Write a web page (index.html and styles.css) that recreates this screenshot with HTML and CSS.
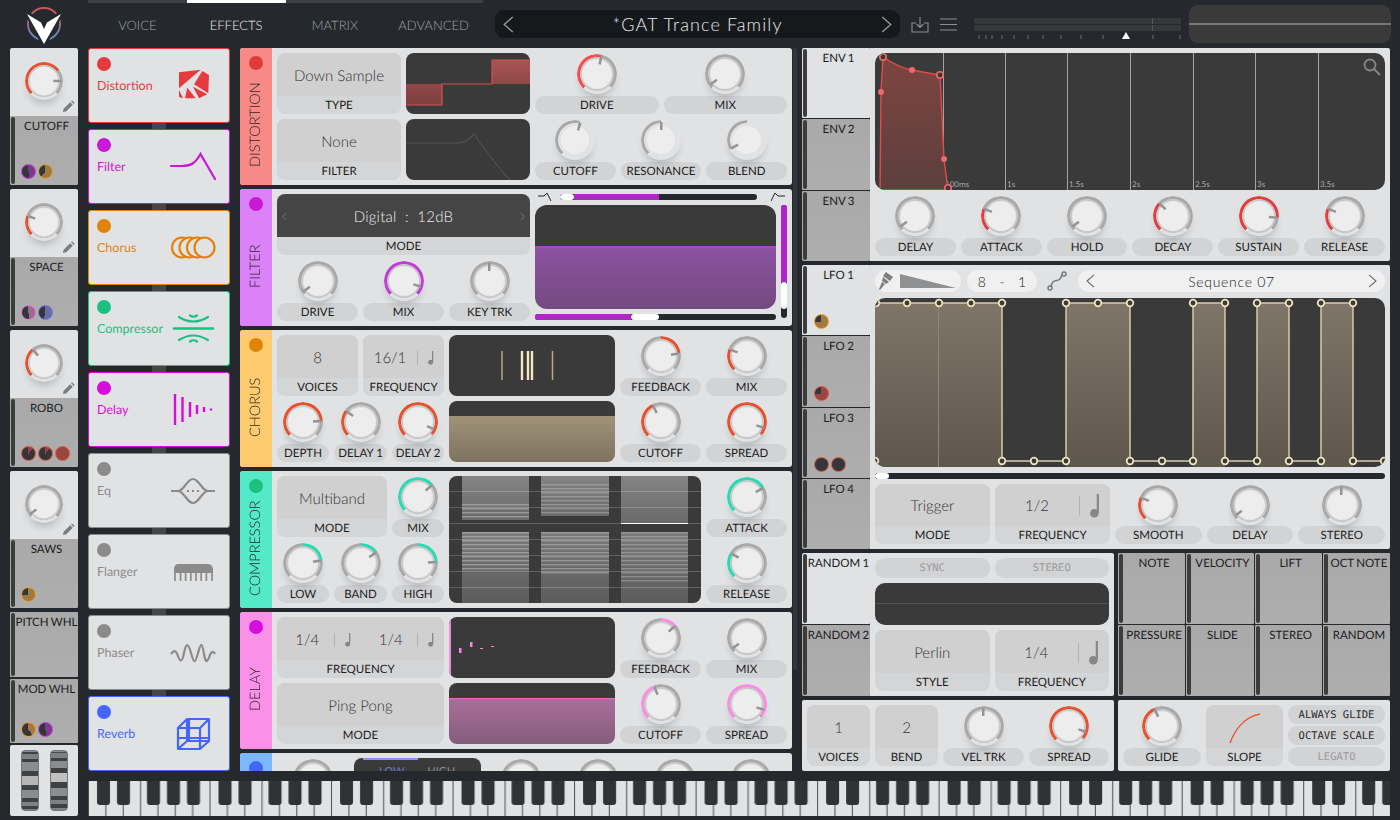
FILE: index.html
```html
<!DOCTYPE html>
<html lang="en">

<head>
    <meta charset="UTF-8">
    <title>Vital</title>
    <link rel="stylesheet" href="styles.css">
</head>

<body>
    <!-- shared icons -->
    <svg class="defs" width="0" height="0">
        <defs>
            <symbol id="note" viewBox="0 0 10 22">
                <path d="M7.6 0V17" fill="none" stroke="currentColor" stroke-width="2" />
                <circle cx="4.4" cy="17.6" r="3.9" fill="currentColor" />
            </symbol>
            <symbol id="pencil" viewBox="0 0 14 14">
                <path d="M1 13l.8-3.6 7-7 2.8 2.8-7 7zM9.8 1.4l1-1 2.8 2.8-1 1z" fill="currentColor" />
            </symbol>
            <symbol id="chev-l" viewBox="0 0 10 16">
                <path d="M9 1L1 8l8 7" fill="none" stroke="currentColor" stroke-width="1.200" />
            </symbol>
            <symbol id="chev-r" viewBox="0 0 10 16">
                <path d="M1 1l8 7-8 7" fill="none" stroke="currentColor" stroke-width="1.200" />
            </symbol>
            <linearGradient id="redfill" x1="0" y1="0" x2="0" y2="1">
                <stop offset="0" stop-color="#a85252" />
                <stop offset="1" stop-color="#7c4040" />
            </linearGradient>
            <linearGradient id="envfill" x1="0" y1="0" x2="0" y2="1">
                <stop offset="0" stop-color="#7e4540" />
                <stop offset="1" stop-color="#5c3f3e" />
            </linearGradient>
            <linearGradient id="lfofill" gradientUnits="userSpaceOnUse" x1="0" y1="0" x2="0" y2="169">
                <stop offset="0" stop-color="#80776a" />
                <stop offset="1" stop-color="#5e574c" />
            </linearGradient>
            <linearGradient id="barfill" x1="0" y1="0" x2="0" y2="1">
                <stop offset="0" stop-color="#848484" />
                <stop offset="1" stop-color="#6a6a6a" />
            </linearGradient>
            <linearGradient id="lowfill" x1="0" y1="0" x2="0" y2="1">
                <stop offset="0" stop-color="#7a7a7a" />
                <stop offset="1" stop-color="#5c5c5c" />
            </linearGradient>
            <pattern id="stripes" width="4" height="4" patternUnits="userSpaceOnUse">
                <rect width="4" height="1.4" fill="#c4c4c4" />
            </pattern>
        </defs>
    </svg>

    <div class="app">
        <div class="logo">
            <svg width="48" height="48" viewBox="0 0 48 48">
                <defs>
                    <linearGradient id="logoring" x1="0" y1="0" x2="0" y2="1">
                        <stop offset="0" stop-color="#c9565a" />
                        <stop offset="0.55" stop-color="#8f6a8c" />
                        <stop offset="1" stop-color="#5f8ec8" />
                    </linearGradient>
                </defs>
                <circle cx="24" cy="24" r="16" fill="none" stroke="url(#logoring)" stroke-width="2" />
                <path d="M5 11L21 21.500 24 29 27 21.500 43 11 25 45H23z" fill="#25292d" stroke="#25292d" stroke-width="3" />
                <path d="M7 14L21 22.500 24 29 27 22.500 41 14 24 44z" fill="#fff" />
            </svg>
        </div>

        <header class="topbar">
            <nav class="tabs-main">
                <a class="main-tab">VOICE</a>
                <a class="main-tab active">EFFECTS</a>
                <a class="main-tab">MATRIX</a>
                <a class="main-tab">ADVANCED</a>
            </nav>
            <div class="preset">
                <svg class="chev" width="11" height="17"><use href="#chev-l" /></svg>
                <span class="preset-name">*GAT Trance Family</span>
                <svg class="chev" width="11" height="17"><use href="#chev-r" /></svg>
            </div>
            <div class="top-icons">
                <svg width="18" height="17" viewBox="0 0 18 17" fill="none" stroke="#8b8e91" stroke-width="1.100">
                    <path d="M5 7H1V16H17V7H13M9 1V11M5.500 8L9 11.500 12.500 8" />
                </svg>
                <svg width="17" height="13" viewBox="0 0 17 13" stroke="#8b8e91" stroke-width="1.100">
                    <path d="M0 1H17M0 6.500H17M0 12H17" />
                </svg>
            </div>
            <div class="meter">
                <div class="meter-bar"></div>
                <div class="meter-bar"></div>
                <svg class="meter-ticks" width="207" height="9" viewBox="0 0 207 9">
                    <path d="M5 3V7M12 3V7M18 3V7M28 3V7M40 3V7M54 3V7M69 3V7M87 3V7M107 3V7M129 3V7M179 3V7M206 3V7" stroke="#6c6f72" />
                    <path d="M152 0L156 7H148z" fill="#fff" />
                </svg>
            </div>
            <div class="scope"></div>
        </header>

        <!-- macro column -->
        <aside class="macros">
            <div class="macro">
                <div class="macro-knob">
                    <div class="knob" style="--b:.7;--v:.83"></div>
                    <svg class="pencil" width="13" height="13"><use href="#pencil" /></svg>
                </div>
                <div class="tab lower">CUTOFF
                    <div class="badges">
                        <i class="badge purple" style="--p:.5"></i>
                        <i class="badge orange" style="--p:.62"></i>
                    </div>
                </div>
            </div>
            <div class="macro">
                <div class="macro-knob">
                    <div class="knob" style="--v:.24"></div>
                    <svg class="pencil" width="13" height="13"><use href="#pencil" /></svg>
                </div>
                <div class="tab lower">SPACE
                    <div class="badges">
                        <i class="badge pink" style="--p:.5"></i>
                        <i class="badge blue" style="--p:.55"></i>
                    </div>
                </div>
            </div>
            <div class="macro">
                <div class="macro-knob">
                    <div class="knob" style="--v:.35"></div>
                    <svg class="pencil" width="13" height="13"><use href="#pencil" /></svg>
                </div>
                <div class="tab lower">ROBO
                    <div class="badges">
                        <i class="badge red" style="--p:.12"></i>
                        <i class="badge red" style="--p:.12"></i>
                        <i class="badge red" style="--p:1"></i>
                    </div>
                </div>
            </div>
            <div class="macro">
                <div class="macro-knob">
                    <div class="knob" style="--b:0;--v:.03"></div>
                    <svg class="pencil" width="13" height="13"><use href="#pencil" /></svg>
                </div>
                <div class="tab lower">SAWS
                    <div class="badges">
                        <i class="badge orange" style="--p:.75"></i>
                    </div>
                </div>
            </div>
            <div class="tab pitch">PITCH WHL</div>
            <div class="tab mod">MOD WHL
                <div class="badges">
                    <i class="badge orange" style="--p:.4"></i>
                    <i class="badge purple" style="--p:.5"></i>
                </div>
            </div>
            <div class="wheels">
                <div class="wheel one"></div>
                <div class="wheel two"></div>
            </div>
        </aside>

        <div class="right">
            <div class="work">
                <!-- effect list -->
                <div class="fx-list">
                    <div class="fx-card c-dist">
                        <div><i class="dot"></i><span class="fx-name">Distortion</span></div>
                        <svg class="fx-icon" width="46" height="34" viewBox="0 0 46 34" fill="currentColor">
                            <path d="M9 3.300L30.700 .7 9 19.300z" />
                            <path d="M32.300 2L39 6 38.300 24.300 24 15.300z" />
                            <path d="M23 17.700L37.300 25.300 29 29.300z" />
                            <path d="M17.300 18.700L25.700 29.300H15z" />
                            <path d="M9 21L13 29.300 9 28z" />
                        </svg>
                    </div>
                    <i class="fx-link"></i>
                    <div class="fx-card c-filter">
                        <div><i class="dot"></i><span class="fx-name">Filter</span></div>
                        <svg class="fx-icon" width="46" height="34" viewBox="0 0 46 34">
                            <path d="M1 16H12C22 16 26 12 30.500 4L45 29" fill="none" stroke="currentColor" stroke-width="2.200" stroke-linecap="round" />
                        </svg>
                    </div>
                    <i class="fx-link"></i>
                    <div class="fx-card c-chorus">
                        <div><i class="dot"></i><span class="fx-name">Chorus</span></div>
                        <svg class="fx-icon" width="46" height="34" viewBox="0 0 46 34" fill="#e1e2e4" stroke="currentColor" stroke-width="2.200">
                            <circle cx="12" cy="16.500" r="10" />
                            <circle cx="19.500" cy="16.500" r="10" />
                            <circle cx="27" cy="16.500" r="10" />
                            <circle cx="34.500" cy="16.500" r="10" />
                        </svg>
                    </div>
                    <i class="fx-link"></i>
                    <div class="fx-card c-comp">
                        <div><i class="dot"></i><span class="fx-name">Compressor</span></div>
                        <svg class="fx-icon" width="46" height="34" viewBox="0 0 46 34" fill="none" stroke="currentColor" stroke-width="2.200" stroke-linecap="round">
                            <path d="M4 16.500H43" stroke-width="2.600" />
                            <path d="M9 5Q23 14 38 5M9 28Q23 19 38 28" />
                            <path d="M20 3.500Q23.500 6 27 3.500M20 29.500Q23.500 27 27 29.500" />
                        </svg>
                    </div>
                    <i class="fx-link"></i>
                    <div class="fx-card c-delay">
                        <div><i class="dot"></i><span class="fx-name">Delay</span></div>
                        <svg class="fx-icon" width="46" height="34" viewBox="0 0 46 34" stroke="currentColor" stroke-width="2.400">
                            <path d="M5 1V32M12.500 4V29M20 9V24M27 12V21M34 14V19M41 15.500V17.500" />
                        </svg>
                    </div>
                    <i class="fx-link"></i>
                    <div class="fx-card c-off">
                        <div><i class="dot"></i><span class="fx-name">Eq</span></div>
                        <svg class="fx-icon" width="46" height="34" viewBox="0 0 46 34" fill="none" stroke="currentColor" stroke-width="2.200">
                            <path d="M1 17H8C14 17 17 5 23 5S32 17 38 17H45M8 17C14 17 17 29 23 29S32 17 38 17" />
                            <path d="M17 17H29" stroke-dasharray="2 3" />
                        </svg>
                    </div>
                    <i class="fx-link"></i>
                    <div class="fx-card c-off">
                        <div><i class="dot"></i><span class="fx-name">Flanger</span></div>
                        <svg class="fx-icon" width="46" height="34" viewBox="0 0 46 34">
                            <path d="M4 15C4 10 6 9 9 9H37C40 9 43 10 43 15V18H4z" fill="currentColor" />
                            <path d="M5 17V26M10.500 17V26M15.600 17V26M20.800 17V26M26 17V26M31.200 17V26M36.400 17V26M42 17V26" stroke="currentColor" stroke-width="1.700" />
                        </svg>
                    </div>
                    <i class="fx-link"></i>
                    <div class="fx-card c-off">
                        <div><i class="dot"></i><span class="fx-name">Phaser</span></div>
                        <svg class="fx-icon" width="46" height="34" viewBox="0 0 46 34">
                            <path d="M1 18C4 14 6 14 8 20S12 27 14 17 18 6 21 17 25 28 28 17 32 6 34 18 38 24 40 19 44 16 45 18" fill="none" stroke="currentColor" stroke-width="2.200" />
                        </svg>
                    </div>
                    <i class="fx-link"></i>
                    <div class="fx-card c-reverb">
                        <div><i class="dot"></i><span class="fx-name">Reverb</span></div>
                        <svg class="fx-icon" width="46" height="34" viewBox="0 0 46 34" fill="none" stroke="currentColor" stroke-width="2.200" stroke-linejoin="round">
                            <path d="M8 11L17 2H39V24L30 32H8zM8 11H30V32M30 11L39 2M17 2V24H39M17 24L8 32M19 2V24M8 21H39" />
                        </svg>
                    </div>
                </div>

                <!-- effect panels -->
                <div class="fx-stack">
                    <section class="panel p-dist">
                        <div class="strip"><i class="dot"></i><span class="strip-name">DISTORTION</span></div>
                        <div class="dist-grid">
                            <div class="box"><div class="value">Down Sample</div><div class="name">TYPE</div></div>
                            <div class="graph">
                                <svg width="124" height="61">
                                    <path d="M0 31H36V52H0zM86 31V7H124V31z" fill="url(#redfill)" />
                                    <path d="M0 52H36V31H86V7H124" fill="none" stroke="#d4504e" stroke-width="1.200" />
                                </svg>
                            </div>
                            <div class="cells">
                                <div class="ctl"><div class="knob" style="--v:.55"></div><div class="pill">DRIVE</div></div>
                                <div class="ctl"><div class="knob" style="--b:0;--v:.03"></div><div class="pill">MIX</div></div>
                            </div>
                            <div class="box"><div class="value">None</div><div class="name">FILTER</div></div>
                            <div class="graph">
                                <svg width="124" height="61">
                                    <path d="M0 24H50C58 24 62 22 68 15 78 30 92 48 104 61" fill="none" stroke="#505050" stroke-width="1.200" />
                                </svg>
                            </div>
                            <div class="cells">
                                <div class="ctl"><div class="knob dim" style="--v:.56"></div><div class="pill">CUTOFF</div></div>
                                <div class="ctl"><div class="knob dim" style="--v:.5"></div><div class="pill">RESONANCE</div></div>
                                <div class="ctl"><div class="knob dim" style="--a:.06;--b:.5;--v:.06"></div><div class="pill">BLEND</div></div>
                            </div>
                        </div>
                    </section>

                    <section class="panel p-filter">
                        <div class="strip"><i class="dot"></i><span class="strip-name">FILTER</span></div>
                        <div class="filter-grid">
                            <div class="filter-left">
                                <div class="box mode">
                                    <div class="value">
                                        <svg width="5" height="9"><use href="#chev-l" /></svg>
                                        <b>Digital&nbsp; :&nbsp; 12dB</b>
                                        <svg width="5" height="9"><use href="#chev-r" /></svg>
                                    </div>
                                    <div class="name">MODE</div>
                                </div>
                                <div class="cells">
                                    <div class="ctl"><div class="knob" style="--b:0;--v:.03"></div><div class="pill">DRIVE</div></div>
                                    <div class="ctl"><div class="knob" style="--b:1;--v:.9"></div><div class="pill">MIX</div></div>
                                    <div class="ctl"><div class="knob" style="--a:.5;--v:.5"></div><div class="pill">KEY TRK</div></div>
                                </div>
                            </div>
                            <div class="filter-right">
                                <div class="slider-row">
                                    <svg width="14" height="10" viewBox="0 0 14 10" fill="none" stroke="#222"><path d="M0 4H6L9 1 13 9" /></svg>
                                    <div class="slider"><i class="grip" style="width:14px"></i><i class="fill" style="width:85px"></i></div>
                                    <svg width="14" height="10" viewBox="0 0 14 10" fill="none" stroke="#222"><path d="M0 9L4 1 7 4H14" /></svg>
                                </div>
                                <div class="filter-view">
                                    <div class="graph wave-filter"></div>
                                    <div class="slider vert"><i class="fill" style="height:77px"></i><i class="grip" style="height:27px"></i></div>
                                </div>
                                <div class="slider low"><i class="fill" style="width:96px"></i><i class="grip" style="width:28px"></i></div>
                            </div>
                        </div>
                    </section>

                    <section class="panel p-chorus">
                        <div class="strip"><i class="dot"></i><span class="strip-name">CHORUS</span></div>
                        <div class="fx-grid">
                            <div class="span3 cells">
                                <div class="box"><div class="value">8</div><div class="name">VOICES</div></div>
                                <div class="box"><div class="value sync"><span class="num">16/1</span><i class="sep"></i><svg class="note" width="8" height="14"><use href="#note" /></svg></div><div class="name">FREQUENCY</div></div>
                            </div>
                            <div class="graph">
                                <svg width="166" height="61">
                                    <path d="M53 16V45M103.500 16V45" stroke="#bba987" stroke-width="1.500" />
                                    <path d="M73 16V45M79 16V45M83 16V45" stroke="#f4e6c4" stroke-width="2.400" />
                                </svg>
                            </div>
                            <div class="ctl"><div class="knob" style="--a:.5;--v:.8"></div><div class="pill">FEEDBACK</div></div>
                            <div class="ctl"><div class="knob" style="--v:.24"></div><div class="pill">MIX</div></div>
                            <div class="ctl"><div class="knob" style="--v:.82"></div><div class="pill">DEPTH</div></div>
                            <div class="ctl"><div class="knob" style="--v:.3"></div><div class="pill">DELAY 1</div></div>
                            <div class="ctl"><div class="knob" style="--b:.98;--v:.92"></div><div class="pill">DELAY 2</div></div>
                            <div class="graph wave-chorus"></div>
                            <div class="ctl"><div class="knob" style="--v:.4"></div><div class="pill">CUTOFF</div></div>
                            <div class="ctl"><div class="knob" style="--b:.98;--v:.9"></div><div class="pill">SPREAD</div></div>
                        </div>
                    </section>

                    <section class="panel p-comp">
                        <div class="strip"><i class="dot"></i><span class="strip-name">COMPRESSOR</span></div>
                        <div class="fx-grid">
                            <div class="box span2"><div class="value">Multiband</div><div class="name">MODE</div></div>
                            <div class="ctl"><div class="knob" style="--v:.68"></div><div class="pill">MIX</div></div>
                            <div class="graph comp-view">
                                <svg width="252" height="127">
                                    <rect x="13" width="67" height="44" fill="url(#barfill)" />
                                    <rect x="92" width="68" height="40" fill="url(#barfill)" />
                                    <rect x="172" width="67" height="47" fill="url(#barfill)" />
                                    <rect x="13" y="56" width="67" height="71" fill="url(#lowfill)" />
                                    <rect x="92" y="56" width="68" height="71" fill="url(#lowfill)" />
                                    <rect x="172" y="56" width="67" height="71" fill="url(#lowfill)" />
                                    <rect x="13" y="28" width="67" height="16" fill="url(#stripes)" opacity=".5" />
                                    <rect x="92" y="8" width="68" height="32" fill="url(#stripes)" opacity=".4" />
                                    <rect x="13" y="56" width="67" height="40" fill="url(#stripes)" opacity=".5" />
                                    <rect x="92" y="56" width="68" height="44" fill="url(#stripes)" opacity=".45" />
                                    <rect x="172" y="56" width="67" height="52" fill="url(#stripes)" opacity=".4" />
                                    <path d="M172 47.500H239" stroke="#fff" stroke-width="1.200" />
                                    <path d="M0 15.500H252M0 31.500H252M0 47.500H252M0 63.500H252M0 79.500H252M0 95.500H252M0 111.500H252" stroke="#fff" stroke-opacity=".2" />
                                </svg>
                            </div>
                            <div class="ctl"><div class="knob" style="--v:.72"></div><div class="pill">ATTACK</div></div>
                            <div class="ctl"><div class="knob" style="--a:.5;--v:.8"></div><div class="pill">LOW</div></div>
                            <div class="ctl"><div class="knob" style="--a:.5;--v:.7"></div><div class="pill">BAND</div></div>
                            <div class="ctl"><div class="knob" style="--a:.5;--v:.82"></div><div class="pill">HIGH</div></div>
                            <div class="ctl"><div class="knob" style="--v:.28"></div><div class="pill">RELEASE</div></div>
                        </div>
                    </section>

                    <section class="panel p-delay">
                        <div class="strip"><i class="dot"></i><span class="strip-name">DELAY</span></div>
                        <div class="fx-grid">
                            <div class="box span3">
                                <div class="value twin">
                                    <div class="sync"><span class="num">1/4</span><i class="sep"></i><svg class="note" width="8" height="14"><use href="#note" /></svg></div>
                                    <div class="sync"><span class="num">1/4</span><i class="sep"></i><svg class="note" width="8" height="14"><use href="#note" /></svg></div>
                                </div>
                                <div class="name">FREQUENCY</div>
                            </div>
                            <div class="graph">
                                <svg width="166" height="61" fill="#f08ae0">
                                    <rect width="2" height="61" />
                                    <rect x="10" y="31" width="2.500" height="5" />
                                    <rect x="21" y="25" width="2.500" height="5" />
                                    <rect x="31" y="31" width="3" height="1" />
                                    <rect x="42" y="29" width="3" height="1" />
                                </svg>
                            </div>
                            <div class="ctl"><div class="knob" style="--a:.5;--v:.68"></div><div class="pill">FEEDBACK</div></div>
                            <div class="ctl"><div class="knob" style="--b:0;--v:.03"></div><div class="pill">MIX</div></div>
                            <div class="box span3"><div class="value">Ping Pong</div><div class="name">MODE</div></div>
                            <div class="graph wave-delay"></div>
                            <div class="ctl"><div class="knob" style="--v:.42"></div><div class="pill">CUTOFF</div></div>
                            <div class="ctl"><div class="knob" style="--b:.98;--v:.9"></div><div class="pill">SPREAD</div></div>
                        </div>
                    </section>

                    <section class="panel p-reverb">
                        <div class="strip"><i class="dot"></i></div>
                        <div class="reverb-row">
                            <div class="ctl"><div class="knob" style="--b:0;--v:.1"></div></div>
                            <div class="band-box"><span class="on">LOW</span><span>HIGH</span></div>
                            <div class="ctl"><div class="knob" style="--v:.2"></div></div>
                            <div class="ctl"><div class="knob" style="--b:0;--v:.1"></div></div>
                            <div class="ctl"><div class="knob" style="--b:0;--v:.1"></div></div>
                            <div class="ctl"><div class="knob" style="--b:0;--v:.1"></div></div>
                        </div>
                    </section>
                </div>
                <i class="scrollbar"></i>

                <!-- modulators -->
                <div class="mods">
                    <section class="tabbed env">
                        <div class="tabs">
                            <div class="tab on">ENV 1</div>
                            <div class="tab">ENV 2</div>
                            <div class="tab">ENV 3</div>
                        </div>
                        <div class="tab-body">
                            <div class="graph">
                                <svg class="env-svg" width="510" height="137">
                                    <path d="M68.500 0V137M130.500 0V137M192.500 0V137M255.500 0V137M318.500 0V137M380.500 0V137M443.500 0V137" stroke="#a4a4a4" />
                                    <g class="env-time">
                                        <text x="70" y="134">100ms</text>
                                        <text x="132" y="134">1s</text>
                                        <text x="194" y="134">1.5s</text>
                                        <text x="257" y="134">2s</text>
                                        <text x="320" y="134">2.5s</text>
                                        <text x="382" y="134">3s</text>
                                        <text x="445" y="134">3.5s</text>
                                    </g>
                                    <path d="M5 137L6 39 8 4C17 10 26 15 37 17L65 22 69 106 73 137z" fill="url(#envfill)" stroke="#e04c48" stroke-width="1.400" />
                                    <g class="env-dots">
                                        <circle cx="37" cy="17" r="3" />
                                        <circle cx="6" cy="39" r="3" />
                                        <circle cx="69" cy="106" r="3" />
                                    </g>
                                    <g class="env-nodes">
                                        <circle cx="8" cy="4" r="3.200" />
                                        <circle cx="65" cy="22" r="3.200" />
                                        <circle cx="73" cy="135" r="3.200" />
                                    </g>
                                    <g fill="none" stroke="#85878a" stroke-width="1.800">
                                        <circle cx="495" cy="12" r="5.500" />
                                        <path d="M499 16L505 22" />
                                    </g>
                                </svg>
                            </div>
                            <div class="cells">
                                <div class="ctl"><div class="knob" style="--b:0;--v:.03"></div><div class="pill">DELAY</div></div>
                                <div class="ctl"><div class="knob" style="--v:.25"></div><div class="pill">ATTACK</div></div>
                                <div class="ctl"><div class="knob" style="--b:0;--v:.03"></div><div class="pill">HOLD</div></div>
                                <div class="ctl"><div class="knob" style="--v:.32"></div><div class="pill">DECAY</div></div>
                                <div class="ctl"><div class="knob" style="--v:.85"></div><div class="pill">SUSTAIN</div></div>
                                <div class="ctl"><div class="knob" style="--v:.25"></div><div class="pill">RELEASE</div></div>
                            </div>
                        </div>
                    </section>

                    <section class="tabbed lfo">
                        <div class="tabs">
                            <div class="tab on">LFO 1<div class="badges"><i class="badge orange" style="--p:.75"></i></div></div>
                            <div class="tab">LFO 2<div class="badges"><i class="badge red" style="--p:.75"></i></div></div>
                            <div class="tab">LFO 3<div class="badges"><i class="badge red" style="--p:0"></i><i class="badge red" style="--p:0"></i></div></div>
                            <div class="tab">LFO 4</div>
                        </div>
                        <div class="tab-body">
                            <div class="lfo-tools">
                                <div class="tool paint">
                                    <svg width="16" height="18" viewBox="0 0 16 18" fill="#7d7f82">
                                        <path d="M8 0L15 5 12 9 5 4zM5 5L11 10 8 12 4 9zM4 10L7 12 2 18 1 17z" />
                                    </svg>
                                    <svg width="56" height="14" viewBox="0 0 56 14" fill="#8f9091"><path d="M0 0L56 14H0z" /></svg>
                                </div>
                                <div class="tool grid-size"><span>8</span><span>-</span><span>1</span></div>
                                <svg class="curve" width="20" height="20" viewBox="0 0 20 20" fill="none" stroke="#77797c" stroke-width="1.500">
                                    <circle cx="3" cy="17" r="2" />
                                    <circle cx="17" cy="3" r="2" />
                                    <path d="M4 15C7 5 12 14 15 4" />
                                </svg>
                                <div class="tool seq">
                                    <svg class="chev" width="9" height="14"><use href="#chev-l" /></svg>
                                    <span class="seq-name">Sequence 07</span>
                                    <svg class="chev" width="9" height="14"><use href="#chev-r" /></svg>
                                </div>
                            </div>
                            <div class="graph">
                                <svg class="lfo-svg" width="510" height="169">
                                    <path d="M0 5H127V169H0zM191 5H255V169H191zM318 5H350V169H318zM382 5H414V169H382zM446 5H478V169H446z" fill="url(#lfofill)" />
                                    <path d="M63.500 5V169" stroke="#8f8677" />
                                    <path d="M0 5H127V163H191V5H255V163H318V5H350V163H382V5H414V163H446V5H478V163H510" fill="none" stroke="#d8cba8" stroke-width="1.500" />
                                    <g class="lfo-nodes">
                                        <circle cx="1" cy="5" /><circle cx="32" cy="5" /><circle cx="64" cy="5" /><circle cx="96" cy="5" /><circle cx="127" cy="5" />
                                        <circle cx="191" cy="5" /><circle cx="223" cy="5" /><circle cx="255" cy="5" />
                                        <circle cx="318" cy="5" /><circle cx="350" cy="5" /><circle cx="382" cy="5" /><circle cx="414" cy="5" /><circle cx="446" cy="5" /><circle cx="478" cy="5" />
                                        <circle cx="0" cy="163" /><circle cx="127" cy="163" /><circle cx="159" cy="163" /><circle cx="191" cy="163" />
                                        <circle cx="255" cy="163" /><circle cx="287" cy="163" /><circle cx="318" cy="163" /><circle cx="350" cy="163" />
                                        <circle cx="382" cy="163" /><circle cx="414" cy="163" /><circle cx="446" cy="163" /><circle cx="478" cy="163" /><circle cx="509" cy="163" />
                                    </g>
                                </svg>
                            </div>
                            <div class="slider lfo-scroll"><i class="grip" style="width:14px"></i></div>
                            <div class="cells lfo-controls">
                                <div class="box"><div class="value">Trigger</div><div class="name">MODE</div></div>
                                <div class="box"><div class="value sync big"><span class="num">1/2</span><i class="sep"></i><svg class="note" width="12" height="24"><use href="#note" /></svg></div><div class="name">FREQUENCY</div></div>
                                <div class="ctl"><div class="knob" style="--v:.25"></div><div class="pill">SMOOTH</div></div>
                                <div class="ctl"><div class="knob" style="--b:0;--v:.03"></div><div class="pill">DELAY</div></div>
                                <div class="ctl"><div class="knob" style="--a:.5;--v:.5"></div><div class="pill">STEREO</div></div>
                            </div>
                        </div>
                    </section>

                    <div class="mod-row">
                        <section class="tabbed random">
                            <div class="tabs">
                                <div class="tab on">RANDOM 1</div>
                                <div class="tab">RANDOM 2</div>
                            </div>
                            <div class="tab-body">
                                <div class="cells toggles">
                                    <div class="toggle">SYNC</div>
                                    <div class="toggle">STEREO</div>
                                </div>
                                <div class="graph flat-line"></div>
                                <div class="cells">
                                    <div class="box"><div class="value">Perlin</div><div class="name">STYLE</div></div>
                                    <div class="box"><div class="value sync big"><span class="num">1/4</span><i class="sep"></i><svg class="note" width="12" height="24"><use href="#note" /></svg></div><div class="name">FREQUENCY</div></div>
                                </div>
                            </div>
                        </section>
                        <section class="key-mods">
                            <div class="tab">NOTE</div>
                            <div class="tab">VELOCITY</div>
                            <div class="tab">LIFT</div>
                            <div class="tab">OCT NOTE</div>
                            <div class="tab">PRESSURE</div>
                            <div class="tab">SLIDE</div>
                            <div class="tab">STEREO</div>
                            <div class="tab">RANDOM</div>
                        </section>
                    </div>

                    <div class="mod-row">
                        <section class="strip-panel voices">
                            <div class="box"><div class="value">1</div><div class="name">VOICES</div></div>
                            <div class="box"><div class="value">2</div><div class="name">BEND</div></div>
                            <div class="ctl"><div class="knob" style="--a:.5;--v:.5"></div><div class="pill">VEL TRK</div></div>
                            <div class="ctl"><div class="knob" style="--b:.98;--v:.9"></div><div class="pill">SPREAD</div></div>
                        </section>
                        <section class="strip-panel glide">
                            <div class="ctl"><div class="knob" style="--v:.41"></div><div class="pill">GLIDE</div></div>
                            <div class="box">
                                <div class="value">
                                    <svg width="32" height="32" viewBox="0 0 32 32"><path d="M1 31C6 17 16 5 31 2" fill="none" stroke="#e8512e" stroke-width="1.400" /></svg>
                                </div>
                                <div class="name">SLOPE</div>
                            </div>
                            <div class="glide-btns">
                                <div class="toggle on">ALWAYS GLIDE</div>
                                <div class="toggle on">OCTAVE SCALE</div>
                                <div class="toggle">LEGATO</div>
                            </div>
                        </section>
                    </div>
                </div>
            </div>

            <svg class="keys" width="1302" height="35">
                <defs>
                    <pattern id="octave" width="121.520" height="35" patternUnits="userSpaceOnUse">
                        <path d="M.5 0V35M17.860 0V35M35.220 0V35M52.580 0V35M69.940 0V35M87.300 0V35M104.660 0V35" stroke="#4a4c4e" />
                        <g fill="#303234">
                            <rect x="9" y="-3" width="13" height="27" rx="3" />
                            <rect x="29" y="-3" width="13" height="27" rx="3" />
                            <rect x="59" y="-3" width="13" height="27" rx="3" />
                            <rect x="79" y="-3" width="13" height="27" rx="3" />
                            <rect x="99" y="-3" width="13" height="27" rx="3" />
                        </g>
                    </pattern>
                </defs>
                <rect width="1302" height="35" fill="#e1e2e4" />
                <rect width="1302" height="35" fill="url(#octave)" />
            </svg>
        </div>
    </div>
</body>

</html>
```

FILE: styles.css
```css
* {
    box-sizing: border-box;
    margin: 0;
    padding: 0;
}

html,
body {
    height: 100%;
    background-color: #25292d;
    color: #1c1c1c;
    font-family: Lato, "Noto Sans", sans-serif;
    font-size: 11.500px;
    text-rendering: geometricPrecision;
    overflow: hidden;
}

.defs {
    position: absolute;
}

i {
    font-style: normal;
    display: block;
}

svg {
    display: block;
}

.app {
    width: 1400px;
    height: 820px;
    padding: 0 10px;
    display: grid;
    grid-template-columns: 68px 1fr;
    grid-template-rows: 48px 1fr;
    column-gap: 10px;
}

/* header */
.logo {
    display: flex;
    justify-content: center;
    margin-top: 0;
}

.topbar {
    display: flex;
    align-items: flex-start;
}

.tabs-main {
    width: 395px;
    display: flex;
}

.main-tab {
    flex: 1;
    height: 38px;
    border-top: 3px solid #3c3f43;
    text-align: center;
    line-height: 44px;
    font-size: 13px;
    font-weight: 300;
    color: #a2a4a6;
}

.main-tab.active {
    border-top-color: #fff;
    color: #f0f0f0;
}

.preset {
    width: 405px;
    height: 28px;
    margin: 10px 0 0 12px;
    padding: 0 8px;
    border-radius: 9px;
    background-color: #16191c;
    display: flex;
    align-items: center;
    justify-content: space-between;
}

.chev {
    color: #9b9d9f;
    flex: none;
}

.preset-name {
    font-size: 18px;
    font-weight: 300;
    letter-spacing: 1.100px;
    color: #eceded;
}

.top-icons {
    display: flex;
    align-items: center;
    gap: 11px;
    margin: 16px 0 0 11px;
}

.meter {
    width: 207px;
    margin: 18px 0 0 17px;
    display: flex;
    flex-direction: column;
    gap: 1px;
}

.meter-bar {
    height: 6px;
    border-radius: 1px;
    background: linear-gradient(90deg, #35383b 86%, #55585a 86% 86.500%, #35383b 86.500%);
}

.meter-ticks {
    margin-top: 0;
}

.scope {
    width: 202px;
    height: 38px;
    margin: 5px 0 0 8px;
    border-radius: 9px;
    background: linear-gradient(#3a3a3a 18px, #787878 18px 20px, #3a3a3a 20px);
}

/* macros */
.macros {
    display: flex;
    flex-direction: column;
    gap: 4px;
    height: 768px;
}

.macro {
    height: 137px;
    display: flex;
    flex-direction: column;
    background-color: #e1e2e4;
    border-radius: 2px;
    overflow: hidden;
    flex: none;
}

.macro-knob {
    height: 68px;
    position: relative;
    display: flex;
    justify-content: center;
    padding-top: 14px;
}

.macro-knob .knob {
    width: 38px;
    height: 38px;
}

.pencil {
    position: absolute;
    right: 3px;
    bottom: 3px;
    color: #7c7c7c;
}

.lower {
    flex: 1;
}

.pitch {
    height: 65px;
    flex: none;
}

.mod {
    height: 64px;
    flex: none;
    margin-top: -2px;
}

.wheels {
    height: 71px;
    flex: none;
    margin-top: -2px;
    background-color: #e1e2e4;
    border-radius: 2px;
    display: flex;
    justify-content: center;
    gap: 11px;
    padding-top: 5px;
}

.wheel {
    width: 18px;
    height: 61px;
    border-radius: 4px;
    border: 1px solid #737578;
}

.wheel.one {
    background: linear-gradient(#8a8c8e 0 1px, #3f4042 1px 3px, #7e8082 3px 8px, #3f4042 8px 11px, #8a8c8e 11px 20px, #3f4042 20px 25px, #b6b6b6 25px 34px, #3f4042 34px 39px, #8a8c8e 39px 47px, #3f4042 47px 51px, #7e8082 51px 55px, #3f4042 55px 58px, #7e8082 58px);
}

.wheel.two {
    background: linear-gradient(#8a8c8e 0 1px, #4a4b4d 1px 2px, #7e8082 2px 7px, #3f4042 7px 10px, #8a8c8e 10px 17px, #3f4042 17px 22px, #c0c0c0 22px 31px, #3f4042 31px 37px, #8a8c8e 37px 45px, #3f4042 45px 49px, #7e8082 49px 53px, #3f4042 53px 57px, #7e8082 57px);
}

.badges {
    display: flex;
    gap: 2px;
    margin-top: auto;
    padding: 0 0 6px 6px;
}

.badge {
    width: 15px;
    height: 15px;
    border-radius: 50%;
    border: 1px solid var(--ring);
    background: conic-gradient(var(--tint) calc(var(--p) * 360deg), #35363a 0);
}

.badge.purple {
    --ring: #c23cd6;
    --tint: #7c3a8e;
}

.badge.orange {
    --ring: #e9a030;
    --tint: #a17a42;
}

.badge.red {
    --ring: #e5513a;
    --tint: #98463f;
}

.badge.pink {
    --ring: #e873d6;
    --tint: #9a6a92;
}

.badge.blue {
    --ring: #6478ec;
    --tint: #666ea4;
}

/* tabs with a slot on the left */
.tab {
    position: relative;
    display: flex;
    flex-direction: column;
    padding: 2px 0 0 5px;
    line-height: 18px;
    text-align: center;
    white-space: nowrap;
    word-spacing: -0.500px;
    background: linear-gradient(#a9a9a9, #aeaeae);
    border-radius: 1px;
}

.tab::before {
    content: "";
    position: absolute;
    left: 1px;
    top: 1px;
    bottom: 1px;
    width: 4px;
    border-radius: 2px;
    background-color: #3c3c3c;
}

.tab.on {
    background: #e1e2e4;
}

/* right side */
.right {
    display: flex;
    flex-direction: column;
    gap: 10px;
    min-width: 0;
}

.work {
    height: 723px;
    display: flex;
    gap: 10px;
    position: relative;
}

/* effect list */
.fx-list {
    width: 142px;
    flex: none;
    display: flex;
    flex-direction: column;
    align-items: center;
}

.fx-card {
    width: 100%;
    height: 75px;
    flex: none;
    padding: 9px 13px 0 9px;
    display: flex;
    justify-content: space-between;
    background-color: #e1e2e4;
    border: 1px solid currentColor;
    border-radius: 3px;
}

.fx-card .dot {
    margin: -1px 0 0 -1px;
    background-color: currentColor;
}

.fx-name {
    display: block;
    margin: 7px 0 0 -1px;
    font-size: 12.500px;
    line-height: 16px;
}

.fx-icon {
    margin-top: 11px;
}

.fx-link {
    width: 14px;
    height: 6px;
    flex: none;
    background-color: #44474a;
}

.dot {
    width: 14px;
    height: 14px;
    border-radius: 50%;
}

.c-dist {
    color: #e53b3f;
}

.c-filter {
    color: #c918d8;
}

.c-chorus {
    color: #e08409;
}

.c-comp {
    color: #1cc080;
}

.c-delay {
    color: #d60edd;
}

.c-off {
    color: #8b8b8b;
}

.c-reverb {
    color: #4466ff;
}

/* effect panels */
.fx-stack {
    width: 552px;
    flex: none;
    height: 723px;
    overflow: hidden;
    display: flex;
    flex-direction: column;
    gap: 4px;
}

.panel {
    height: 137px;
    flex: none;
    display: flex;
    background-color: #e1e2e4;
    border-radius: 3px;
    overflow: hidden;
}

.strip {
    width: 32px;
    flex: none;
    display: flex;
    flex-direction: column;
    align-items: center;
    padding: 8px 0 5px;
}

.strip-name {
    flex: 1;
    writing-mode: vertical-rl;
    transform: rotate(180deg);
    text-align: center;
    font-size: 14.500px;
    font-weight: 300;
    color: #231f1f;
    line-height: 32px;
}

.p-dist {
    --accent: #f44e4e;
}

.p-dist .strip {
    background-color: #f78a86;
}

.p-dist .dot {
    background-color: #e03a3a;
}

.p-filter {
    --accent: #c03bd8;
}

.p-filter .strip {
    background-color: #dc82f8;
}

.p-filter .dot {
    background-color: #c918d8;
}

.p-chorus {
    --accent: #e8512e;
}

.p-chorus .strip {
    background-color: #ffcb6f;
}

.p-chorus .dot {
    background-color: #e08409;
}

.p-comp {
    --accent: #27dcb2;
}

.p-comp .strip {
    background-color: #54e9c9;
}

.p-comp .dot {
    background-color: #1cc080;
}

.p-delay {
    --accent: #fb8ce6;
}

.p-delay .strip {
    background-color: #fa90e8;
}

.p-delay .dot {
    background-color: #d60edd;
}

.p-reverb {
    --accent: #8a9cff;
}

.p-reverb .strip {
    background-color: #7bb8fd;
}

.p-reverb .dot {
    background-color: #4466ff;
}

.cells {
    display: flex;
    gap: 5px;
    min-width: 0;
}

.cells > * {
    flex: 1;
    min-width: 0;
}

.dist-grid {
    flex: 1;
    padding: 5px;
    display: grid;
    grid-template-columns: 124px 124px 1fr;
    grid-template-rows: 61px 61px;
    gap: 5px;
}

.fx-grid {
    flex: 1;
    padding: 5px;
    display: grid;
    grid-template-columns: 52px 53px 52px 166px 81px 81px;
    grid-template-rows: 61px 61px;
    gap: 5px;
}

.span2 {
    grid-column: span 2;
}

.span3 {
    grid-column: span 3;
}

.comp-view {
    grid-column: span 2;
    grid-row: span 2;
}

.filter-grid {
    flex: 1;
    padding: 5px;
    display: grid;
    grid-template-columns: 253px 252px;
    gap: 5px;
}

.filter-left {
    display: flex;
    flex-direction: column;
    gap: 5px;
}

.filter-left .cells {
    flex: 1;
}

.filter-right {
    display: flex;
    flex-direction: column;
    gap: 5px;
}

.slider-row {
    height: 6px;
    display: flex;
    align-items: center;
    justify-content: space-between;
    padding: 0 2px 0 3px;
    gap: 8px;
}

.slider-row .slider {
    flex: 1;
    margin-right: 6px;
}

.filter-view {
    display: flex;
    gap: 5px;
    height: 113px;
    margin-bottom: -9px;
}

.filter-view .graph {
    width: 241px;
    height: 104px;
}

.slider {
    height: 6px;
    border-radius: 3px;
    background-color: #25292d;
    display: flex;
    overflow: hidden;
}

.slider .fill {
    background-color: #b424cc;
}

.slider .grip {
    background-color: #fff;
    border-radius: 3px;
}

.slider.vert {
    width: 6px;
    height: 113px;
    flex-direction: column;
}

.slider.low {
    width: 241px;
}

/* boxes and labels */
.box {
    display: flex;
    flex-direction: column;
    border-radius: 8px;
    overflow: hidden;
    background-color: #d4d5d7;
    min-width: 0;
}

.value {
    flex: 1;
    display: flex;
    align-items: center;
    justify-content: center;
    padding-top: 2px;
    background-color: #d0d0d0;
    font-size: 15px;
    font-weight: 300;
    color: #333;
}

.name {
    height: 18px;
    line-height: 20px;
    text-align: center;
    white-space: nowrap;
}

.mode .value {
    justify-content: space-between;
    padding: 2px 5px 0;
    background-color: #454545;
    color: #8a8a8a;
}

.mode b {
    font-size: 15px;
    font-weight: 300;
    letter-spacing: 0.2px;
    color: #eee;
}

.mode {
    flex: none;
    height: 61px;
}

.sync {
    gap: 0;
    color: #333;
    display: flex;
    align-items: center;
}

.num {
    flex: 1;
    text-align: center;
}

.sep {
    width: 1px;
    height: 14px;
    background-color: #b4b4b4;
}

.note {
    color: #878787;
    margin: 0 9px;
}

.sync.big .sep {
    height: 20px;
}

.twin {
    gap: 0;
}

.twin .sync {
    flex: 1;
    padding-left: 4px;
}

.ctl {
    display: flex;
    flex-direction: column;
    align-items: center;
    justify-content: space-between;
    padding-top: 1px;
    min-width: 0;
}

.pill {
    align-self: stretch;
    height: 18px;
    line-height: 20px;
    border-radius: 9px;
    text-align: center;
    background-color: #d2d3d5;
    white-space: nowrap;
}

/* knob: --v is the pointer, --a and --b bound the lit arc */
.knob {
    width: 40px;
    height: 40px;
    flex: none;
    position: relative;
    border-radius: 50%;
    background: radial-gradient(closest-side, #ededed 70%, #e4e4e4 74%, #c8c8c9 78%, #c8c8c9 84%, transparent 86%);
    box-shadow: 0 7px 8px -4px rgba(0, 0, 0, 0.22);
    --track: #a9a9a9;
}

.knob::before {
    content: "";
    position: absolute;
    inset: 0;
    border-radius: 50%;
    background: conic-gradient(from -135deg,
            var(--track) calc(var(--a, 0) * 270deg),
            var(--accent, #e8512e) 0 calc(var(--b, var(--v)) * 270deg),
            var(--track) 0 270deg,
            transparent 0);
    -webkit-mask: radial-gradient(closest-side, transparent 83%, #000 86%);
    mask: radial-gradient(closest-side, transparent 83%, #000 86%);
}

.knob::after {
    content: "";
    position: absolute;
    inset: 0;
    background: linear-gradient(#949494, #949494) 50% 6% / 2.500px 20% no-repeat;
    transform: rotate(calc(var(--v) * 270deg - 135deg));
}

.knob.dim {
    --track: transparent;
    --accent: #a9a9a9;
    background: radial-gradient(closest-side, #ededed 68%, transparent 72%);
}

.env .knob {
    --accent: #e23e3e;
}

/* dark views */
.graph {
    background-color: #3a3a3a;
    border-radius: 8px;
    overflow: hidden;
    min-width: 0;
}

.wave-filter {
    background: linear-gradient(#3a3a3a 39.500%, #b040d0 39.500% 41%, #8c52a0 41%, #744a80);
    border-radius: 12px;
}

.wave-chorus {
    background: linear-gradient(#3a3a3a 15px, #a09278 15px, #7e7360);
}

.wave-delay {
    background: linear-gradient(#3a3a3a 15px, #e070c8 15px 16px, #aa6e9c 16px, #845c7a);
}

.flat-line {
    height: 42px;
    background: linear-gradient(#3a3a3a 20px, #505050 20px 21px, #3a3a3a 21px);
    border-radius: 10px;
    flex: none;
}

.band-box {
    width: 127px;
    height: 40px;
    flex: none;
    border-radius: 8px;
    background: linear-gradient(90deg, #8a8cff 55px, transparent 55px) 9px 0 / 100% 2px no-repeat, #3a3a3a;
    display: flex;
    justify-content: space-around;
    padding: 7px 14px 0;
    font-size: 11px;
    color: #8e8e8e;
}

.band-box .on {
    color: #6f76c8;
}

.reverb-row {
    flex: 1;
    padding: 5px;
    display: flex;
    gap: 5px;
}

.reverb-row .ctl {
    flex: 1;
}

.scrollbar {
    position: absolute;
    left: 705px;
    top: 0;
    width: 4px;
    height: 622px;
    border-radius: 2px;
    background-color: #33373b;
}

/* modulators */
.mods {
    width: 588px;
    flex: none;
    display: flex;
    flex-direction: column;
    gap: 4px;
}

.tabbed {
    display: flex;
    background-color: #e1e2e4;
    border-radius: 2px;
    overflow: hidden;
}

.tabs {
    width: 68px;
    flex: none;
    display: flex;
    flex-direction: column;
    gap: 1px;
    background-color: #25292d;
}

.tabs .tab {
    flex: 1;
}

.tabs .badges {
    padding-left: 7px;
}

.tab-body {
    flex: 1;
    min-width: 0;
    padding: 5px;
    display: flex;
    flex-direction: column;
    gap: 5px;
}

.env {
    height: 213px;
}

.env .graph {
    height: 137px;
    border-radius: 10px;
}

.env .cells {
    height: 61px;
}

.env-time text {
    font-size: 8px;
    fill: #a8a8a8;
}

.env-dots circle {
    fill: #ee6a6a;
}

.env-nodes circle {
    fill: #3a3a3a;
    stroke: #ee6a6a;
    stroke-width: 1.600;
}

.lfo {
    height: 284px;
}

.lfo .graph {
    height: 169px;
    flex: none;
    margin-top: 1px;
    border-radius: 10px;
}

.lfo-tools {
    height: 22px;
    display: flex;
    align-items: center;
    gap: 6px;
}

.tool {
    height: 22px;
    border-radius: 11px;
    background-color: #f0f0f1;
    display: flex;
    align-items: center;
}

.paint {
    width: 86px;
    padding-left: 3px;
    gap: 6px;
}

.grid-size {
    width: 70px;
    justify-content: space-around;
    padding: 0 4px;
    font-size: 14px;
    font-weight: 300;
}

.curve {
    margin: 0 5px 0 4px;
}

.seq {
    flex: 1;
    justify-content: space-between;
    padding: 0 8px;
}

.seq .chev {
    color: #666;
}

.seq-name {
    font-size: 14px;
    font-weight: 300;
    letter-spacing: 0.7px;
    color: #222;
}

.lfo-nodes circle {
    r: 3.300px;
    fill: #3a3a3a;
    stroke: #efe2be;
    stroke-width: 1.800;
}

.lfo-scroll {
    flex: none;
    margin-top: 1px;
}

.lfo-controls {
    height: 60px;
    flex: none;
}

.lfo-controls .box {
    flex: none;
    width: 115px;
}

.mod-row {
    display: flex;
    gap: 4px;
}

.random {
    width: 312px;
    height: 143px;
    flex: none;
}

.random .tab-body > .cells:last-child {
    height: 61px;
}

.toggles {
    height: 20px;
}

.toggle {
    height: 100%;
    border-radius: 9px;
    background-color: #d2d3d5;
    display: flex;
    align-items: center;
    justify-content: center;
    font-family: "DejaVu Sans Mono", monospace;
    font-size: 10.500px;
    color: #9a9a9a;
}

.toggle.on {
    color: #2a2a2a;
}

.key-mods {
    flex: 1;
    height: 143px;
    display: grid;
    grid-template-columns: repeat(4, 1fr);
    grid-template-rows: repeat(2, 1fr);
    gap: 1px;
}

.strip-panel {
    height: 71px;
    padding: 5px;
    display: grid;
    gap: 5px;
    background-color: #e1e2e4;
    border-radius: 2px;
}

.voices {
    width: 312px;
    flex: none;
    grid-template-columns: 63px 63px 81px 80px;
}

.glide {
    flex: 1;
    grid-template-columns: 78px 77px 97px;
}

.glide-btns {
    display: grid;
    grid-template-rows: repeat(3, 1fr);
    gap: 2px;
}

.keys {
    flex: none;
}
```
